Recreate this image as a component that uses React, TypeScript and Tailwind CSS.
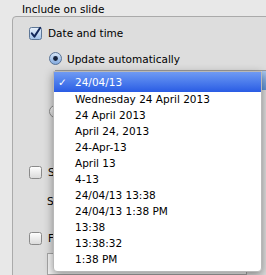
import React from 'react';

const formats = [
  'Wednesday 24 April 2013',
  '24 April 2013',
  'April 24, 2013',
  '24-Apr-13',
  'April 13',
  '4-13',
  '24/04/13 13:38',
  '24/04/13 1:38 PM',
  '13:38',
  '13:38:32',
  '1:38 PM',
];

function Checkbox({ checked }: { checked?: boolean }) {
  return (
    <svg width="13" height="13" viewBox="0 0 13 13" className="shrink-0 overflow-visible">
      <defs>
        <linearGradient id={checked ? 'cbOn' : 'cbOff'} x1="0" y1="0" x2="0" y2="1">
          <stop offset="0" stopColor={checked ? '#e9f1fb' : '#ffffff'} />
          <stop offset="1" stopColor={checked ? '#9fc0e8' : '#d9d9d9'} />
        </linearGradient>
      </defs>
      <rect x="0.5" y="0.5" width="12" height="12" rx="2" fill={`url(#${checked ? 'cbOn' : 'cbOff'})`} stroke={checked ? '#5d7696' : '#8a8a8a'} />
      {checked && (
        <path d="M2.8 6.4 L5.4 9.6 L11.2 0.8" fill="none" stroke="#12275a" strokeWidth="2" strokeLinecap="round" strokeLinejoin="round" />
      )}
    </svg>
  );
}

function Radio({ checked }: { checked?: boolean }) {
  return (
    <svg width="13" height="13" viewBox="0 0 13 13" className="shrink-0">
      <defs>
        <linearGradient id={checked ? 'rdOn' : 'rdOff'} x1="0" y1="0" x2="0" y2="1">
          <stop offset="0" stopColor={checked ? '#dbe8f8' : '#ffffff'} />
          <stop offset="1" stopColor={checked ? '#7fa8de' : '#d6d6d6'} />
        </linearGradient>
      </defs>
      <circle cx="6.5" cy="6.5" r="6" fill={`url(#${checked ? 'rdOn' : 'rdOff'})`} stroke={checked ? '#5a7394' : '#8a8a8a'} />
      {checked && <circle cx="6.5" cy="6.5" r="2.4" fill="#16223a" />}
    </svg>
  );
}

export default function App() {
  return (
    <div className="relative w-[266px] h-[275px] overflow-hidden bg-[#e8e8e8] font-['DejaVu_Sans',sans-serif] text-[10.5px] text-black">
      <div className="h-[16px] pl-[22px] pt-[2px] leading-[14px]">Include on slide</div>

      {/* Group box */}
      <div className="ml-[12px] w-[290px] h-[300px] rounded-[4px] border border-[#aaaaaa] bg-[#dddddd] pl-[16px] pt-[10px]">
        <div className="flex items-center gap-[6px] h-[13px]">
          <Checkbox checked />
          <span>Date and time</span>
        </div>

        <div className="mt-[12px] ml-[20px] flex items-center gap-[5px] h-[13px]">
          <Radio checked />
          <span className="pt-[3px]">Update automatically</span>
        </div>

        {/* popup button behind menu */}
        <div className="mt-[5px] ml-[26px] flex h-[20px] border-t border-[#9c9c9c]">
          <div className="w-[207px] bg-white" />
          <div className="w-[24px] bg-linear-to-b from-[#a9c8ef] to-[#5f93d8]" />
        </div>

        <div className="mt-[15px] ml-[20px] flex items-center gap-[5px] h-[13px]">
          <Radio />
          <span>Fixed</span>
        </div>

        <div className="mt-[48px] flex items-center gap-[6px] h-[13px]">
          <Checkbox />
          <span>Slide number</span>
        </div>

        <div className="mt-[15px] ml-[18px] h-[14px] leading-[14px]">Start at:</div>

        <div className="mt-[24px] flex items-center gap-[6px] h-[13px]">
          <Checkbox />
          <span>Footer</span>
        </div>

        <div className="mt-[8px] ml-[18px] h-[22px] w-[200px] border border-[#a5a5a5] bg-[#f4f4f4]" />
      </div>

      {/* Popup menu */}
      <div className="absolute left-[53px] top-[71px] w-[209px] h-[201px] rounded-b-[4px] border border-[#b8b8b8] bg-white pb-[3px] shadow-[0_3px_10px_rgba(0,0,0,0.4)]">
        <div className="flex h-[20px] items-center pt-[2px] bg-linear-to-b from-[#6f9af3] to-[#2a5be4] text-white">
          <span className="w-[21px] pl-[4px]">✓</span>
          <span>24/04/13</span>
        </div>
        {formats.map((f) => (
          <div key={f} className="flex h-[16px] items-center pl-[21px]">
            {f}
          </div>
        ))}
      </div>
    </div>
  );
}
